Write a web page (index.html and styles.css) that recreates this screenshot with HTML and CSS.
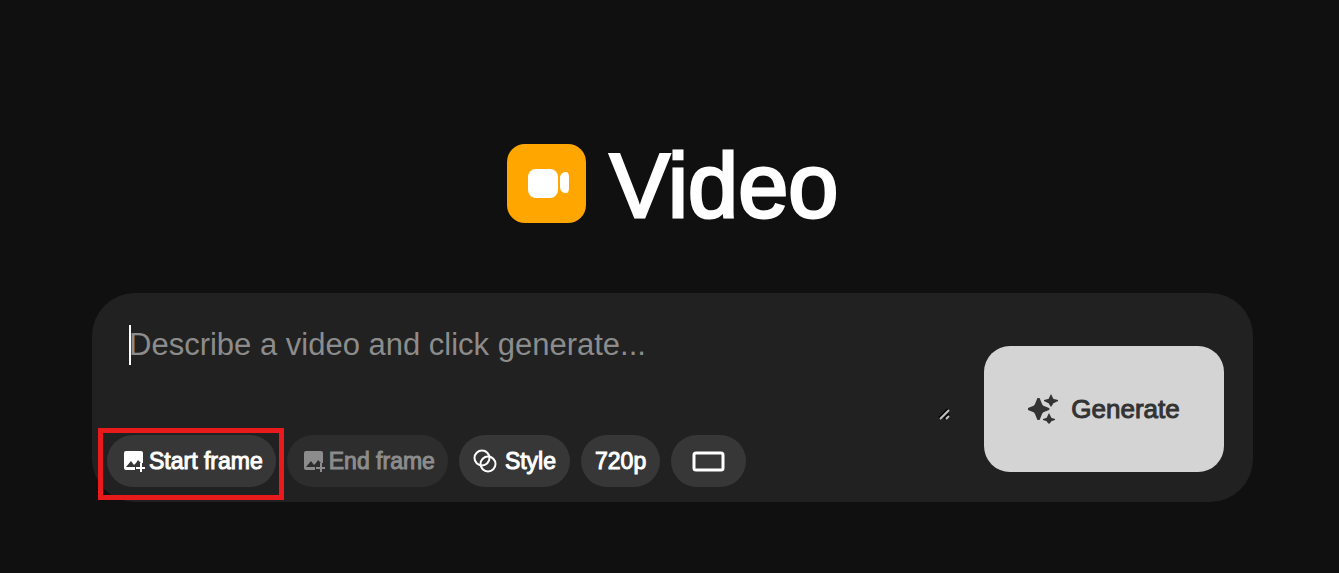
FILE: index.html
```html
<!DOCTYPE html>
<html lang="en">
	<head>
		<meta charset="UTF-8" />
		<meta name="viewport" content="width=device-width, initial-scale=1.0" />
		<title>Video</title>
		<link rel="stylesheet" href="styles.css">
	</head>
	<body>
		<header class="header">
			<div class="logo">
				<svg viewBox="0 0 79 79" aria-hidden="true">
					<rect x="21" y="25" width="30" height="29" rx="8" />
					<path d="M53 34c0-4 3-6 6-6 2 0 3 2 3 5v11c0 3-1 5-3 5-3 0-6-2-6-6z" />
				</svg>
			</div>
			<h1>Video</h1>
		</header>

		<form class="composer">
			<div class="composer-main">
				<div class="prompt">
					<textarea class="prompt-input" aria-label="Prompt" placeholder="Describe a video and click generate..."></textarea>
					<span class="caret"></span>
					<svg class="resize-grip" viewBox="0 0 12 12" aria-hidden="true">
						<path class="grip-shadow" d="M1 10L10 1M6 11L11 6" />
						<path class="grip-line" d="M2 11L11 2M8 11L11 8" />
					</svg>
				</div>

				<div class="options">
					<div class="highlight">
						<button type="button" class="pill pill-frame">
							<svg class="frame-icon" viewBox="0 0 21 21" aria-hidden="true">
								<path d="M2 0h15a2 2 0 0 1 2 2v10h-4v3h-4v4H2a2 2 0 0 1-2-2V2a2 2 0 0 1 2-2z" />
								<path class="frame-hills" d="M2 16l5-6 3 4 2-2 2-3 3 3v1l-2 1v2z" />
								<path class="frame-plus" d="M17 12v9M12 17h9" />
							</svg>
							Start frame
						</button>
					</div>
					<button type="button" class="pill pill-frame" disabled>
						<svg class="frame-icon" viewBox="0 0 21 21" aria-hidden="true">
							<path d="M2 0h15a2 2 0 0 1 2 2v10h-4v3h-4v4H2a2 2 0 0 1-2-2V2a2 2 0 0 1 2-2z" />
							<path class="frame-hills" d="M2 16l5-6 3 4 2-2 2-3 3 3v1l-2 1v2z" />
							<path class="frame-plus" d="M17 12v9M12 17h9" />
						</svg>
						End frame
					</button>
					<button type="button" class="pill pill-style">
						<svg class="style-icon" viewBox="0 0 24 24" aria-hidden="true">
							<circle cx="9" cy="9" r="7.5" />
							<circle cx="15" cy="15" r="7.5" />
						</svg>
						Style
					</button>
					<button type="button" class="pill">720p</button>
					<button type="button" class="pill pill-ratio" aria-label="Aspect ratio">
						<svg class="ratio-icon" viewBox="0 0 33 21" aria-hidden="true">
							<rect x="2" y="2" width="29" height="17" rx="2" />
						</svg>
					</button>
				</div>
			</div>

			<button type="submit" class="generate">
				<svg class="sparkle-icon" viewBox="0 0 30 30" aria-hidden="true">
					<path d="M10 4h1q1 0 1 1l2 5q1 2 2 2l5 2q1 1 0 2l-5 2q-1 0-2 2l-2 5q0 1-1 1h-1q-1 0-1-1l-2-5q-1-2-2-2l-5-2q-1-1 0-2l5-2q1 0 2-2l2-5q0-1 1-1z" />
					<path d="M23 0l2 4q0 1 1 1l4 1v1l-4 2q-1 0-1 1l-2 3-2-3q0-1-1-1l-4-2V6l4-1q1 0 1-1z" />
					<path d="M21 19l2 4q0 1 1 1l3 1v1l-3 1q-1 0-1 1l-2 2-2-2q0-1-1-1l-3-1v-1l3-1q1 0 1-1z" />
				</svg>
				Generate
			</button>
		</form>
	</body>
</html>
```

FILE: styles.css
```css
:root {
	--bg-color: #101010;
	--panel-bg: #212121;
	--pill-bg: #373737;
	--pill-bg-disabled: #2d2d2d;
	--text-color: #ffffff;
	--text-muted: #8c8c8c;
	--accent: #ffa600;
	--highlight: #e81a1c;
}

* {
	margin: 0;
	padding: 0;
	box-sizing: border-box;
}

body {
	font-family: "Liberation Sans", Arial, sans-serif;
	background-color: var(--bg-color);
	color: var(--text-color);
	padding: 133px 86px 40px 92px;
}

button {
	font: inherit;
	color: inherit;
	border: none;
	cursor: pointer;
}

.header {
	display: flex;
	align-items: center;
	justify-content: center;
	gap: 24px;
	margin-bottom: 59px;
}

.logo {
	width: 79px;
	height: 79px;
	border-radius: 18px;
	background-color: var(--accent);
}

.logo svg {
	display: block;
	fill: #ffffff;
}

h1 {
	padding-top: 5px;
	font-size: 90px;
	line-height: 96px;
	font-weight: 400;
	-webkit-text-stroke: 3px currentColor;
}

.composer {
	display: flex;
	align-items: flex-end;
	gap: 34px;
	padding: 32px 29px 15px 15px;
	border-radius: 43px;
	background-color: var(--panel-bg);
}

.composer-main {
	flex: 1;
}

.prompt {
	position: relative;
	height: 95px;
	margin: 0 0 15px 22px;
}

.prompt-input {
	display: block;
	width: 100%;
	height: 100%;
	font: inherit;
	font-size: 31px;
	line-height: 40px;
	color: var(--text-color);
	background: none;
	border: none;
	outline: none;
	resize: none;
}

.prompt-input::placeholder {
	color: var(--text-muted);
}

.caret {
	position: absolute;
	top: 0;
	left: 0;
	width: 2px;
	height: 40px;
	background-color: #ffffff;
}

.resize-grip {
	position: absolute;
	right: 0;
	bottom: 0;
	width: 12px;
	height: 12px;
	fill: none;
	stroke-width: 2;
}

.grip-shadow {
	stroke: #000000;
}

.grip-line {
	stroke: #c0c0c0;
}

.options {
	display: flex;
	gap: 11px;
}

.highlight {
	position: relative;
}

.highlight::after {
	content: "";
	position: absolute;
	inset: -7px -8px -13px -9px;
	border: 5px solid var(--highlight);
	pointer-events: none;
}

.pill {
	display: flex;
	align-items: center;
	height: 52px;
	padding: 0 14px;
	border-radius: 26px;
	background-color: var(--pill-bg);
	font-size: 23px;
	-webkit-text-stroke: 1px currentColor;
}

.pill:disabled {
	background-color: var(--pill-bg-disabled);
	color: var(--text-muted);
	cursor: default;
}

.pill-frame {
	gap: 4px;
	padding: 0 13px 0 17px;
}

.pill-style {
	gap: 8px;
}

.pill-ratio {
	padding: 0 21px;
}

.frame-icon {
	width: 21px;
	height: 21px;
	fill: currentColor;
}

.frame-icon .frame-hills {
	fill: var(--pill-bg);
}

.pill:disabled .frame-hills {
	fill: var(--pill-bg-disabled);
}

.frame-plus {
	stroke: currentColor;
	stroke-width: 2;
}

.style-icon {
	width: 24px;
	height: 24px;
	fill: none;
	stroke: currentColor;
	stroke-width: 2;
}

.ratio-icon {
	width: 33px;
	height: 21px;
	fill: none;
	stroke: currentColor;
	stroke-width: 3;
}

.generate {
	display: flex;
	align-items: center;
	justify-content: center;
	gap: 13px;
	width: 240px;
	height: 126px;
	margin-bottom: 15px;
	border-radius: 26px;
	background-color: #d4d4d4;
	color: #333333;
	font-size: 26px;
	-webkit-text-stroke: 1px currentColor;
}

.sparkle-icon {
	width: 30px;
	height: 30px;
	fill: currentColor;
}
```
